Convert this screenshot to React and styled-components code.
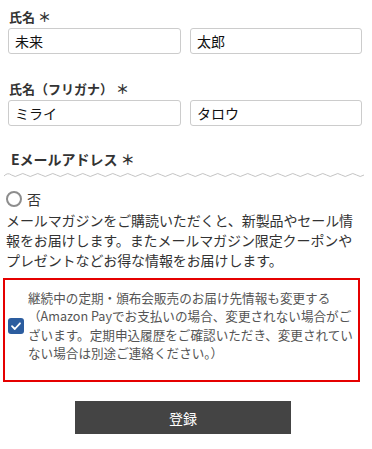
import React from 'react';
import styled, { createGlobalStyle } from 'styled-components';

const GlobalStyle = createGlobalStyle`
  html, body {
    margin: 0;
    padding: 0;
    background: #fff;
  }
  body {
    font-family: "Noto Sans CJK JP", "Noto Sans", sans-serif;
    color: #333;
  }
`;

const Page = styled.div`
  width: 372px;
  padding-top: 8px;
`;

const Field = styled.div`
  padding: 0 10px 0 8px;
  margin-bottom: ${({ $gap }) => $gap || 0}px;
`;

const Label = styled.div`
  font-size: ${({ $size }) => $size || 13}px;
  font-weight: 700;
  line-height: 18px;
  height: 18px;
  padding-left: ${({ $indent }) => $indent || 1}px;
  margin-bottom: 2px;
  color: #333;
  white-space: pre;
`;

const InputRow = styled.div`
  display: grid;
  grid-template-columns: 173px 172px;
  gap: 9px;
`;

const TextInput = styled.input`
  box-sizing: border-box;
  height: 26px;
  width: 100%;
  border: 1px solid #ccc;
  border-radius: 3px;
  padding: 0 6px;
  font-family: "Noto Sans CJK JP", sans-serif;
  font-size: 14px;
  color: #111;
  background: #fff;
  outline: none;
`;

const Wave = styled.svg`
  display: block;
  margin: 3px 0 0 0;
`;

const RadioRow = styled.label`
  display: flex;
  align-items: center;
  gap: 5px;
  padding-left: 6px;
  margin-top: 10px;
  height: 18px;
  font-size: 14px;
  color: #333;
`;

const RadioDot = styled.span`
  box-sizing: border-box;
  width: 16px;
  height: 16px;
  border-radius: 50%;
  border: 2px solid #8d8d8d;
  background: #fff;
`;

const Intro = styled.p`
  margin: 2px 0 0 0;
  padding: 0 12px 0 6px;
  font-size: 14px;
  line-height: 20px;
  color: #333;
  letter-spacing: -0.1px;
`;

const Notice = styled.div`
  box-sizing: border-box;
  width: 357px;
  height: 104px;
  margin: 8px 0 0 3px;
  border: 2px solid #e50000;
  display: flex;
  align-items: flex-start;
  padding: 9px 4px 0 3px;
  gap: 4px;
`;

const CheckBox = styled.span`
  flex: 0 0 auto;
  margin-top: 29px;
  width: 16px;
  height: 16px;
  display: flex;
`;

const NoticeText = styled.div`
  font-size: 12.6px;
  line-height: 18.3px;
  color: #555;
`;

const Submit = styled.button`
  display: flex;
  align-items: center;
  justify-content: center;
  width: 216px;
  height: 33px;
  margin: 19px 0 0 75px;
  border: none;
  background: #444;
  color: #fff;
  font-family: "Noto Sans CJK JP", sans-serif;
  font-size: 14px;
  cursor: pointer;
`;

function wavePath() {
  let d = 'M4 5';
  for (let x = 4; x < 362; x += 15) {
    d += ` Q${x + 3.75} 1 ${x + 7.5} 4 T${x + 15} 4`;
  }
  return d;
}

export default function App() {
  return (
    <Page>
      <GlobalStyle />
      <Field $gap={26}>
        <Label>氏名 ＊</Label>
        <InputRow>
          <TextInput defaultValue="未来" />
          <TextInput defaultValue="太郎" />
        </InputRow>
      </Field>
      <Field $gap={24}>
        <Label>氏名（フリガナ） ＊</Label>
        <InputRow>
          <TextInput defaultValue="ミライ" />
          <TextInput defaultValue="タロウ" />
        </InputRow>
      </Field>
      <Field>
        <Label $size={14} $indent={3}>Eメールアドレス ＊</Label>
      </Field>
      <Wave width="372" height="9" viewBox="0 0 372 9">
        <path d={wavePath()} fill="none" stroke="#c4c4c4" strokeWidth="1" />
      </Wave>
      <RadioRow>
        <RadioDot />
        否
      </RadioRow>
      <Intro>
        メールマガジンをご購読いただくと、新製品やセール情報をお届けします。またメールマガジン限定クーポンやプレゼントなどお得な情報をお届けします。
      </Intro>
      <Notice>
        <CheckBox>
          <svg width="16" height="16" viewBox="0 0 16 16">
            <rect x="0" y="0" width="16" height="16" rx="3" fill="#2c5d9f" />
            <path d="M4 8.2 L6.8 11 L12 5.3" fill="none" stroke="#fff" strokeWidth="1.8" strokeLinecap="round" strokeLinejoin="round" />
          </svg>
        </CheckBox>
        <NoticeText>
          継続中の定期・頒布会販売のお届け先情報も変更する（Amazon Payでお支払いの場合、変更されない場合がございます。定期申込履歴をご確認いただき、変更されていない場合は別途ご連絡ください。）
        </NoticeText>
      </Notice>
      <Submit>登録</Submit>
    </Page>
  );
}
